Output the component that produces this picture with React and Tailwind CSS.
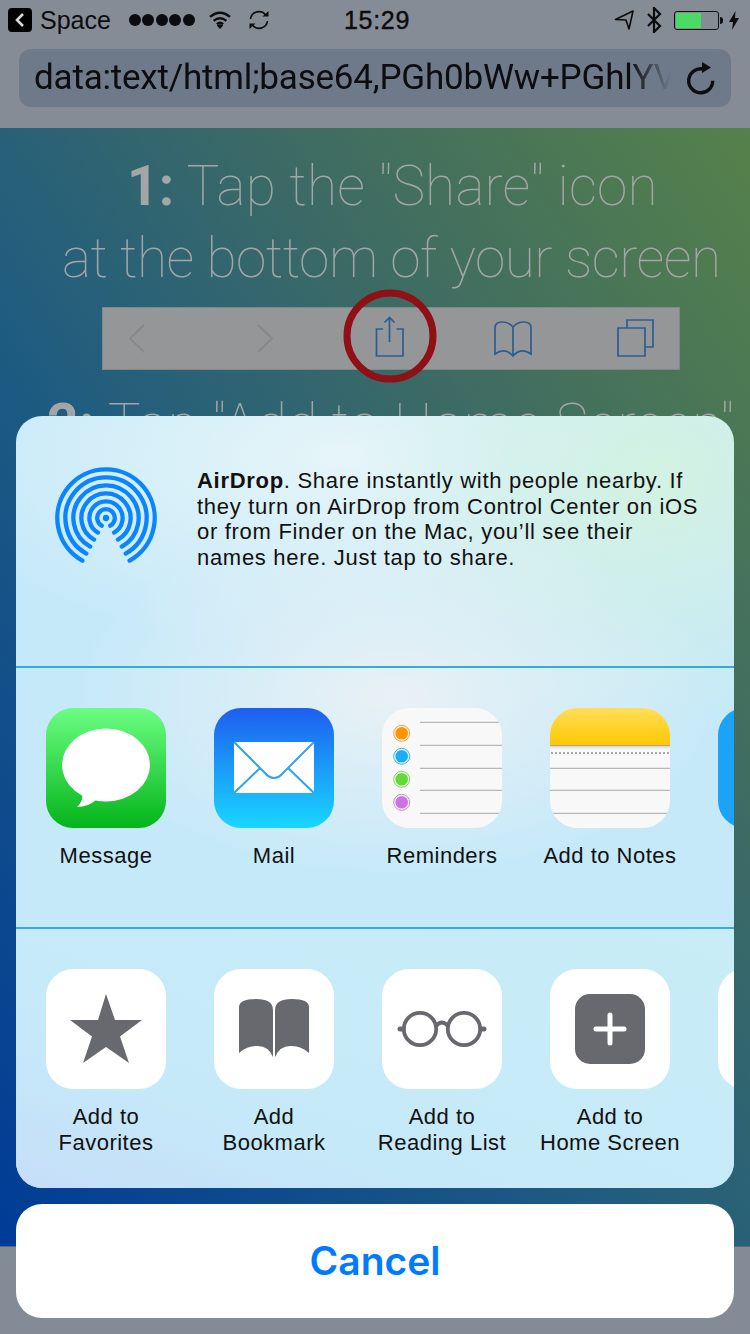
import React from "react";

const sans = "font-['Liberation_Sans',Arial,sans-serif]";

function Airdrop() {
    const rings = [48.7, 40.6, 32.6, 24.6, 16.6, 8.8];
    const s = Math.sin((29 * Math.PI) / 180);
    const c = Math.cos((29 * Math.PI) / 180);
    return (
        <svg width="104" height="104" viewBox="-52 -52 104 104" fill="none" stroke="#0a84ff" strokeWidth="4.3" strokeLinecap="round">
            {rings.map((r) => (
                <path key={r} d={`M${-r * s} ${r * c}A${r} ${r} 0 1 1 ${r * s} ${r * c}`} />
            ))}
            <circle r="3.2" fill="#0a84ff" stroke="none" />
        </svg>
    );
}

function Tile({ className = "bg-white", children }) {
    return (
        <div className={`w-[120px] h-[120px] rounded-[27px] overflow-hidden ${className}`}>
            <svg width="120" height="120" viewBox="0 0 120 120" className="block">{children}</svg>
        </div>
    );
}

const MessageIcon = () => (
    <Tile className="bg-[linear-gradient(#6cfe83,#04b41a)]">
        <ellipse cx="60" cy="57" rx="44" ry="36.5" fill="#fff" />
        <path d="M36 84Q38 93 31 99Q42 99 50 92Z" fill="#fff" />
    </Tile>
);

const MailIcon = () => (
    <Tile className="bg-[linear-gradient(#1e5ef0,#19d7ff)]">
        <rect x="20" y="34" width="80" height="51" fill="#fff" />
        <path d="M20 34L50 64Q60 76 70 64L100 34M20 85L46 60M100 85L74 60" fill="none" stroke="#2ba3f7" strokeWidth="2" />
    </Tile>
);

const RemindersIcon = () => (
    <Tile className="bg-[#f8f8f8]">
        {[[25.3, "#ff9500"], [48.3, "#1badf8"], [71.3, "#63da38"], [94.3, "#cc73e1"]].map(([y, color]) => (
            <g key={y}>
                <circle cx="19.7" cy={y} r="8" fill="none" stroke={color} strokeWidth="0.9" />
                <circle cx="19.7" cy={y} r="6.3" fill={color} />
            </g>
        ))}
        {[14.3, 37.3, 60.3, 82.3, 105.3].map((y, i) => (
            <rect key={y} x="38" y={y - 0.5} width={i === 0 ? 79 : 82} height="1" fill="#a9a9a9" />
        ))}
    </Tile>
);

const NotesIcon = () => (
    <Tile className="bg-[#f8f8f8]">
        <defs>
            <linearGradient id="notes" x1="0" y1="0" x2="0" y2="1">
                <stop offset="0" stopColor="#ffde5a" />
                <stop offset="1" stopColor="#ffc800" />
            </linearGradient>
        </defs>
        <rect width="120" height="37" fill="url(#notes)" />
        <rect y="37" width="120" height="1.5" fill="#a9a79d" />
        <rect y="38.5" width="120" height="2" fill="#e6e6e6" />
        <path d="M1 45H120" stroke="#a9a9a9" strokeWidth="2" strokeDasharray="2 2" />
        {[60.3, 82.3, 105.3].map((y) => (
            <rect key={y} y={y - 0.5} width="120" height="1" fill="#a9a9a9" />
        ))}
    </Tile>
);

const StarIcon = () => (
    <Tile>
        <path d="M60 25L69 51H96L74 67.6L83 94L60 78L37 94L46 67.6L24 51H52Z" fill="#68686f" />
    </Tile>
);

const BookIcon = () => (
    <Tile>
        <path d="M25 38Q25 30 42 30Q59 30 59 41V88Q54 76 42 77Q33 77 25 84Z" fill="#68686f" />
        <path d="M95 38Q95 30 78 30Q61 30 61 41V88Q66 76 78 77Q87 77 95 84Z" fill="#68686f" />
    </Tile>
);

const GlassesIcon = () => (
    <Tile>
        <g fill="none" stroke="#68686f" strokeWidth="3.8">
            <circle cx="38" cy="60" r="16.2" />
            <circle cx="82" cy="60" r="16.2" />
            <path d="M54 57Q60 50 66 57" />
        </g>
        <path d="M18 60H21M99 60H102" stroke="#68686f" strokeWidth="5" strokeLinecap="round" />
    </Tile>
);

const PlusIcon = () => (
    <Tile>
        <rect x="25" y="25" width="70" height="70" rx="15" fill="#68686f" />
        <path d="M60 46V74M46 60H74" stroke="#fff" strokeWidth="5" strokeLinecap="round" />
    </Tile>
);

function ShareItem({ icon, lines }) {
    return (
        <div className="w-[120px] shrink-0 flex flex-col items-center">
            {icon}
            <div className="mt-[15px] text-[22px] leading-[26px] tracking-[0.5px] text-[#111] text-center whitespace-nowrap">
                {lines.map((l) => (
                    <div key={l}>{l}</div>
                ))}
            </div>
        </div>
    );
}

function StatusBar() {
    return (
        <div className="h-10 flex items-center relative text-[#0c0c0e]">
            <div className="ml-2 w-6 h-6 rounded-[4px] bg-black flex items-center justify-center">
                <svg width="12" height="16" viewBox="0 0 12 16" fill="none" stroke="#d8d8d8" strokeWidth="2.6"><path d="M9 2L3 8L9 14" /></svg>
            </div>
            <span className="ml-2 text-[25px] leading-none">Space</span>
            <div className="ml-[18px] flex gap-[1.5px]">
                {[0, 1, 2, 3, 4].map((i) => (
                    <span key={i} className="w-3 h-3 rounded-full bg-[#0c0c0e]" />
                ))}
            </div>
            <svg className="ml-[13px]" width="24" height="20" viewBox="0 0 26 22" fill="none" stroke="#0c0c0e" strokeWidth="2.6">
                <path d="M2 7.5Q13 -1.5 24 7.5M6 12Q13 6 20 12M9.5 15.5Q13 12.5 16.5 15.5" />
                <path d="M13 21L9.5 17Q13 14.5 16.5 17Z" fill="#0c0c0e" stroke="none" />
            </svg>
            <svg className="ml-[15px]" width="24" height="24" viewBox="0 0 24 24" fill="none" stroke="#0c0c0e" strokeWidth="1.7">
                <path d="M3.5 11A8.5 8.5 0 0 1 19 7.5M20.5 13A8.5 8.5 0 0 1 5 16.5" />
                <path d="M15.5 8.5H21.5V3ZM8.5 15.5H2.5V21Z" fill="#0c0c0e" stroke="none" />
            </svg>
            <span className="absolute left-[344px] text-[25px] leading-none tracking-[0.7px] [-webkit-text-stroke:0.4px_#0c0c0e]">15:29</span>
            <div className="ml-auto mr-[11px] flex items-center">
                <svg width="20" height="20" viewBox="0 0 20 20" fill="none" stroke="#0c0c0e" strokeWidth="1.6"><path d="M19 1L1.5 9.5L12 10L15 19Z" strokeLinejoin="round" /></svg>
                <svg className="ml-3" width="16" height="26" viewBox="0 0 16 26" fill="none" stroke="#0c0c0e" strokeWidth="2.2"><path d="M2 7L14 19L8 25V1L14 7L2 19" /></svg>
                <div className="ml-3 w-[45px] h-[19px] rounded-[3px] border border-[#111] p-px">
                    <div className="w-[25px] h-full bg-[#4cd964]" />
                </div>
                <div className="ml-px w-[3px] h-[7px] bg-[#111] rounded-r-sm" />
                <svg className="ml-[6px]" width="10" height="19" viewBox="0 0 10 19"><path d="M6.5 0L0 11H4L3 19L10 7H6Z" fill="#0c0c0e" /></svg>
            </div>
        </div>
    );
}

function SafariBar() {
    return (
        <div className="ml-[102px] w-[578px] h-[63px] mt-[13px] bg-[#949698] border border-[#7d8a88] relative">
            <svg className="absolute left-[19px] top-[14px]" width="30" height="36" viewBox="0 0 30 36" fill="none" stroke="#85898a" strokeWidth="1.8"><path d="M22 3L8 16.5L22 30" /></svg>
            <svg className="absolute left-[147px] top-[14px]" width="30" height="36" viewBox="0 0 30 36" fill="none" stroke="#85898a" strokeWidth="1.8"><path d="M8 3L22 16.5L8 30" /></svg>
            <svg className="absolute left-[265px] top-[5px]" width="44" height="50" viewBox="0 0 44 50" fill="none" stroke="#2c5d92" strokeWidth="1.7">
                <path d="M15 16H8.5V43H35V16H28.5M21.5 29V5M16.5 9.5L21.5 4.5L26.5 9.5" />
            </svg>
            <svg className="absolute left-[388px] top-[11px]" width="44" height="44" viewBox="0 0 44 44" fill="none" stroke="#2c5d92" strokeWidth="1.7">
                <path d="M22 8Q18 3 11 3Q4 3 4 9V35Q14 28 22 37Q30 28 40 35V9Q40 3 33 3Q26 3 22 8V37" />
            </svg>
            <svg className="absolute left-[510px] top-[9px]" width="44" height="44" viewBox="0 0 44 44" fill="none" stroke="#2c5d92" strokeWidth="1.7">
                <path d="M5 11H32V39H5ZM14 11V3H40V30H32" />
            </svg>
            <svg className="absolute left-[237px] -top-[22px]" width="100" height="100" viewBox="0 0 100 100" fill="none">
                <circle cx="50" cy="50" r="43" stroke="#8f1015" strokeWidth="7" />
            </svg>
        </div>
    );
}

export default function App() {
    return (
        <div className={`relative w-[750px] h-[1334px] overflow-hidden ${sans}`}>
            <header className="h-[128px] bg-[#858c96] flex flex-col">
                <StatusBar />
                <div className="mt-[9px] mx-[19px] h-[58px] rounded-[12px] bg-[#6e7a8a] flex items-center pl-[15px] pr-[16px]">
                    <div className="w-[650px] shrink-0 whitespace-nowrap font-['Roboto',sans-serif] text-[35px] leading-[44px] tracking-[-0.2px] bg-[linear-gradient(to_right,#0b0d10_595px,#6e7a8a_637px)] bg-clip-text text-transparent">
                        data:text/html;base64,PGh0bWw+PGhlYV
                    </div>
                    <svg className="ml-auto shrink-0" width="30" height="34" viewBox="0 0 30 34" fill="none" stroke="#0c0e12" strokeWidth="3.4">
                        <path d="M27.7 19.7A12 12 0 1 1 18 8" />
                        <path d="M17 1L26 6.5L17 12Z" fill="#0c0e12" stroke="none" />
                    </svg>
                </div>
            </header>

            <main className="h-[1118px] overflow-hidden bg-[linear-gradient(to_top_right,#003b97_0%,#1f5c80_42%,#3f6c62_70%,#56814a_100%)]">
                <div className="pt-[22px] font-['Roboto',sans-serif] font-thin text-[55px] leading-[72px] text-[#a3a6a6] whitespace-nowrap">
                    <div className="ml-[127px] tracking-[0.15px]"><b className="font-bold">1:</b> Tap the "Share" icon</div>
                    <div className="ml-[62px] tracking-[-0.5px]">at the bottom of your screen</div>
                    <SafariBar />
                    <div className="ml-[47px] mt-[18px] tracking-[0.55px]"><b className="font-bold">2:</b> Tap "Add to Home Screen"</div>
                </div>
            </main>

            <footer className="h-[88px] bg-[#828b96] border-t border-[#5c6a78]" />

            {/* share sheet sits over the dimmed page */}
            <div className="absolute left-4 top-[416px] w-[718px] h-[772px] rounded-[26px] overflow-hidden flex flex-col bg-[radial-gradient(ellipse_320px_180px_at_380px_280px,#e9f1f5_0%,transparent_100%),radial-gradient(ellipse_300px_260px_at_640px_60px,#d2f2e2_0%,transparent_100%),radial-gradient(ellipse_420px_200px_at_330px_40px,#e6f5f8_0%,transparent_100%),linear-gradient(to_bottom,#c6e9f9,#c6e9f9)]">
                <section className="h-[250px] shrink-0 flex items-start border-b-2 border-[#35aadb] box-content">
                    <div className="ml-[38px] mt-[50px]"><Airdrop /></div>
                    <p className="ml-[39px] mt-[52px] text-[22px] leading-[25.7px] tracking-[0.7px] text-[#111] whitespace-nowrap">
                        <b>AirDrop</b>. Share instantly with people nearby. If<br />
                        they turn on AirDrop from Control Center on iOS<br />
                        or from Finder on the Mac, you’ll see their<br />
                        names here. Just tap to share.
                    </p>
                </section>
                <section className="h-[219px] shrink-0 box-content border-b-2 border-[#35aadb] flex gap-12 pl-[30px] pt-[40px]">
                    <ShareItem icon={<MessageIcon />} lines={["Message"]} />
                    <ShareItem icon={<MailIcon />} lines={["Mail"]} />
                    <ShareItem icon={<RemindersIcon />} lines={["Reminders"]} />
                    <ShareItem icon={<NotesIcon />} lines={["Add to Notes"]} />
                    <ShareItem icon={<Tile className="bg-[#1da3f5]" />} lines={[""]} />
                </section>
                <section className="flex gap-12 pl-[30px] pt-[40px] bg-[linear-gradient(to_top_right,#c5def8_0%,#c6e9f9_30%,#c8edf6_100%)] flex-1">
                    <ShareItem icon={<StarIcon />} lines={["Add to", "Favorites"]} />
                    <ShareItem icon={<BookIcon />} lines={["Add", "Bookmark"]} />
                    <ShareItem icon={<GlassesIcon />} lines={["Add to", "Reading List"]} />
                    <ShareItem icon={<PlusIcon />} lines={["Add to", "Home Screen"]} />
                    <ShareItem icon={<Tile />} lines={[""]} />
                </section>
            </div>

            <button className="absolute left-4 top-[1204px] w-[718px] h-[114px] pt-[1px] rounded-[26px] bg-white text-[#007aff] text-[39px] font-['Inter',sans-serif] font-semibold">
                Cancel
            </button>
        </div>
    );
}
